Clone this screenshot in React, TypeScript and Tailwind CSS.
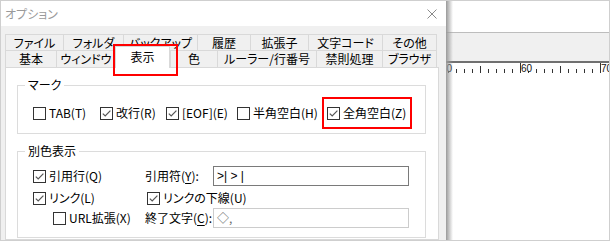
import React from 'react';

const font = "font-['Noto_Sans_CJK_JP','Noto_Sans',sans-serif] [font-feature-settings:'palt']";

const row1 = [
  { label: 'ファイル', w: 'w-[58px]' },
  { label: 'フォルダ', w: 'w-[60px]' },
  { label: 'バックアップ', w: 'w-[74px]' },
  { label: '履歴', w: 'w-[53px]' },
  { label: '拡張子', w: 'w-[58px]' },
  { label: '文字コード', w: 'w-[74px]' },
  { label: 'その他', w: 'w-[55px]' },
];

const row2 = [
  { label: '基本', w: 'w-[51px]' },
  { label: 'ウィンドウ', w: 'w-[59px]' },
  { label: '表示', w: 'w-[55px]', active: true },
  { label: '色', w: 'w-[47px]' },
  { label: 'ルーラー/行番号', w: 'w-[99px]' },
  { label: '禁則処理', w: 'w-[66px]' },
  { label: 'ブラウザ', w: 'w-[55px]' },
];

function Box({ checked }: { checked?: boolean }) {
  return (
    <span className="w-[13px] h-[13px] border border-[#333333] bg-white flex items-center justify-center shrink-0">
      {checked && (
        <svg width="11" height="11" viewBox="0 0 11 11">
          <path d="M1.8 5.6 L4.2 8 L9.4 2.6" fill="none" stroke="#555555" strokeWidth="1.2" />
        </svg>
      )}
    </span>
  );
}

function CheckItem({ label, checked, className = '' }: { label: string; checked?: boolean; className?: string }) {
  return (
    <div className={`flex items-center gap-[3px] h-[16px] ${className}`}>
      <Box checked={checked} />
      <span className="leading-[16px] whitespace-nowrap">{label}</span>
    </div>
  );
}

function Ruler() {
  // 8px per column, tall tick every 10, mid tick at 5
  const ticks = [];
  for (let k = 0; k <= 20; k++) {
    const x = k * 8 - 6;
    const tall = k % 10 === 0;
    const mid = k % 10 === 5;
    ticks.push(
      <line key={k} x1={x + 0.5} x2={x + 0.5} y1={tall ? 0 : mid ? 3 : 6} y2={10} stroke="#333" strokeWidth="1" />
    );
  }
  return (
    <svg width="164" height="10" className="block">
      {ticks}
      <rect x="-4" y="0" width="13" height="8" fill="white" />
      <rect x="76" y="0" width="13" height="8" fill="white" />
      <rect x="156" y="0" width="13" height="8" fill="white" />
      <text x="-5" y="9" fontSize="10" fontFamily="Liberation Sans, sans-serif" fill="#111">50</text>
      <text x="75" y="9" fontSize="10" fontFamily="Liberation Sans, sans-serif" fill="#111">60</text>
      <text x="155" y="9" fontSize="10" fontFamily="Liberation Sans, sans-serif" fill="#111">70</text>
    </svg>
  );
}

export default function App() {
  return (
    <div className={`w-[610px] h-[241px] border border-[#cfcfcf] flex overflow-hidden text-[12px] text-black ${font}`}>
      {/* dialog */}
      <div className="w-[445px] shrink-0 flex flex-col bg-[#f0f0f0]">
        <div className="h-[25px] bg-white flex items-center justify-between pl-[4px] pr-[9px]">
          <span className="text-[#9a9a9a] leading-none">オプション</span>
          <svg width="10" height="10" viewBox="0 0 10 10">
            <path d="M0.5 0.5 L9.5 9.5 M9.5 0.5 L0.5 9.5" stroke="#8a8a8a" strokeWidth="1" />
          </svg>
        </div>

        <div className="flex-1 flex flex-col pl-[4px] pr-[7px] pt-[8px]">
          <div className="flex h-[16px]">
            {row1.map((t, i) => (
              <div
                key={t.label}
                className={`${t.w} h-[16px] border-t border-l border-[#d9d9d9] flex items-center justify-center leading-none ${i === row1.length - 1 ? 'border-r' : ''}`}
              >
                {t.label}
              </div>
            ))}
          </div>
          <div className="flex items-start h-[17px]">
            {row2.map((t, i) =>
              t.active ? (
                <div
                  key={t.label}
                  className={`${t.w} h-[22px] -mt-[4px] relative z-10 bg-white border-t border-l border-r border-[#d9d9d9] flex items-center justify-center leading-none pb-[2px]`}
                >
                  {t.label}
                  <div className="absolute -left-[3px] -top-[3px] w-[65px] h-[32px] border-2 border-[#ff0000]" />
                </div>
              ) : (
                <div
                  key={t.label}
                  className={`${t.w} h-[17px] border-t border-l border-[#d9d9d9] flex items-center justify-center leading-none ${i === row2.length - 1 ? 'border-r' : ''}`}
                >
                  {t.label}
                </div>
              )
            )}
          </div>

          <div className="flex-1 bg-white border border-[#d9d9d9] pt-[9px] pl-[11px] pr-[12px]">
            <fieldset className="border border-[#dcdcdc] pt-[12px] pb-[12px]">
              <legend className="ml-[7px] px-[3px] leading-[16px]">マーク</legend>
              <div className="flex pl-[15px]">
                <CheckItem label="TAB(T)" className="w-[67px]" />
                <CheckItem label="改行(R)" checked className="w-[66px]" />
                <CheckItem label="[EOF](E)" checked className="w-[71px]" />
                <CheckItem label="半角空白(H)" className="w-[90px]" />
                <div className="relative">
                  <CheckItem label="全角空白(Z)" checked />
                  <div className="absolute -left-[5px] -top-[8px] w-[90px] h-[32px] border-2 border-[#ff0000]" />
                </div>
              </div>
            </fieldset>

            <fieldset className="mt-[9px] border border-[#dcdcdc] pt-[7px] pb-[9px]">
              <legend className="ml-[7px] px-[3px] leading-[16px]">別色表示</legend>
              <div className="pl-[15px] flex flex-col">
                <div className="flex items-center h-[20px]">
                  <CheckItem label="引用行(Q)" checked className="w-[112px]" />
                  <span className="w-[68px] leading-[16px] whitespace-nowrap">
                    引用符(<span className="underline underline-offset-2">Y</span>):
                  </span>
                  <div className="w-[196px] h-[20px] border border-[#7a7a7a] bg-white flex items-center pl-[3px] leading-none font-['Liberation_Sans',sans-serif] [font-feature-settings:normal] whitespace-pre">
                    &gt;| &gt; |
                  </div>
                </div>
                <div className="flex items-center h-[16px] mt-[4px]">
                  <CheckItem label="リンク(L)" checked className="w-[114px]" />
                  <CheckItem label="リンクの下線(U)" checked />
                </div>
                <div className="flex items-center h-[20px] mt-[2px]">
                  <CheckItem label="URL拡張(X)" className="w-[92px] ml-[20px]" />
                  <span className="w-[68px] leading-[16px] whitespace-nowrap">
                    終了文字(<span className="underline underline-offset-2">C</span>):
                  </span>
                  <div className="w-[196px] h-[20px] border border-[#cccccc] bg-white flex items-center pl-[3px] leading-none text-[#6d6d6d]">
                    ◇,
                  </div>
                </div>
              </div>
            </fieldset>
          </div>
        </div>
      </div>

      {/* editor behind the dialog */}
      <div className="flex-1 relative bg-white flex flex-col">
        <div className="h-[31px] bg-white" />
        <div className="h-[29px] bg-[#f0f0f0] border-t border-[#bdbdbd]" />
        <div className="h-[12px] border-t-2 border-[#707070] bg-white">
          <Ruler />
        </div>
        <div className="flex-1 bg-white" />
        <div className="absolute left-0 top-0 bottom-0 w-[7px] bg-gradient-to-r from-[#9a9a9a] to-transparent" />
      </div>
    </div>
  );
}
